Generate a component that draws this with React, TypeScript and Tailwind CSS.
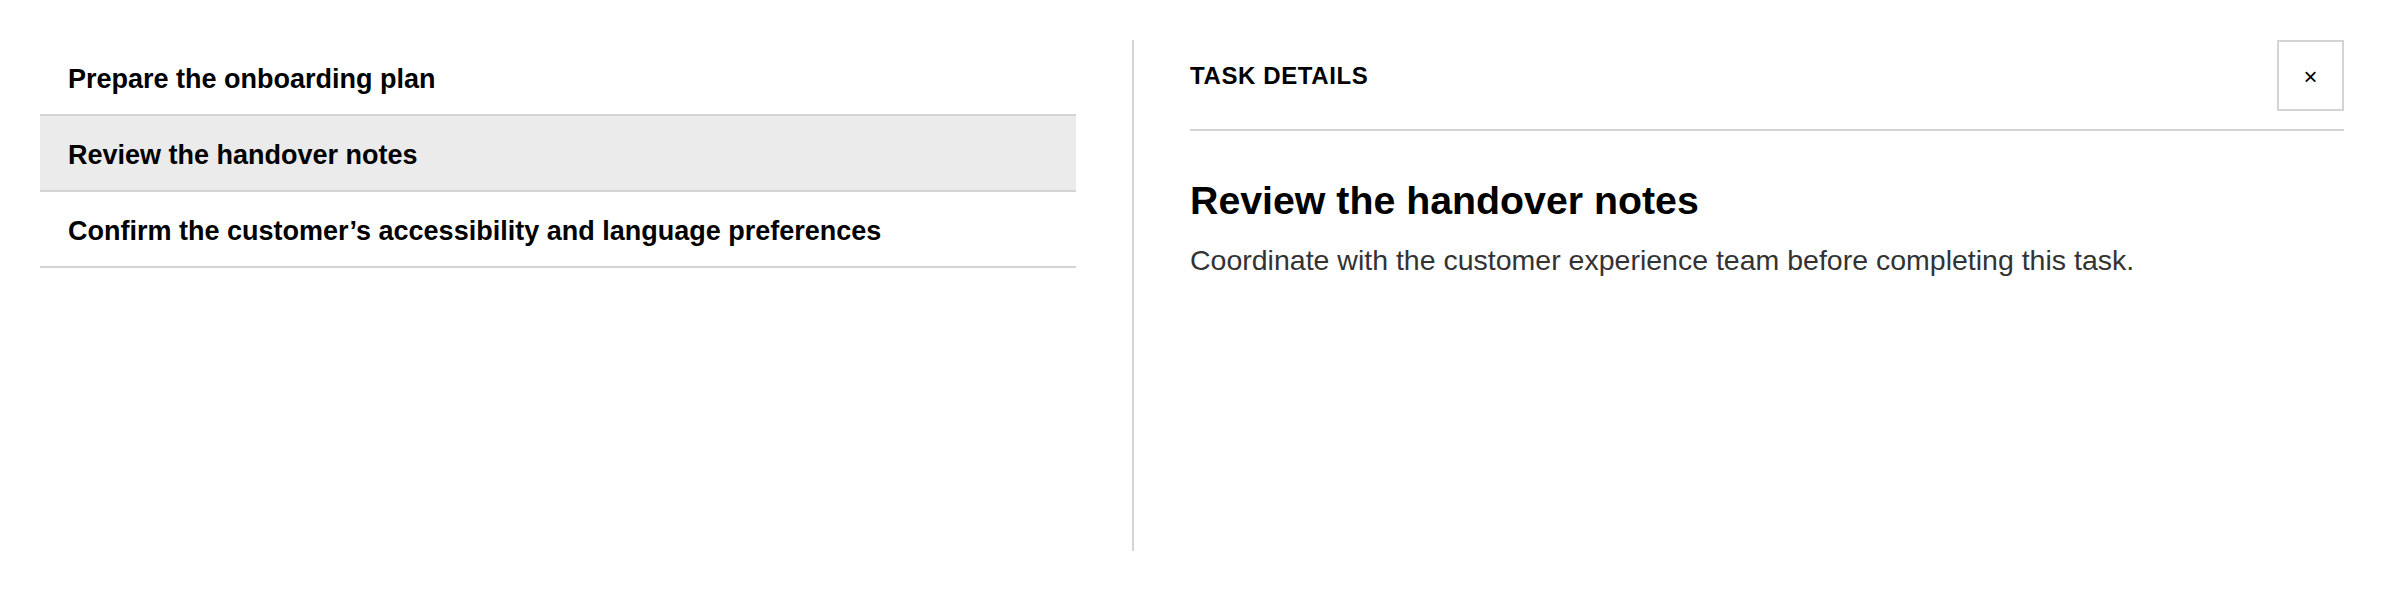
import React from "react";

const tasks = [
  "Prepare the onboarding plan",
  "Review the handover notes",
  "Confirm the customer\u2019s accessibility and language preferences",
];

export default function App() {
  const selected = 1;
  return (
    <div
      className="flex h-[591px] w-[2384px] bg-white p-[40px] text-black"
      style={{ fontFamily: '"Liberation Sans", Arial, Helvetica, sans-serif' }}
    >
      <ul className="w-[1036px] shrink-0">
        {tasks.map((t, i) => (
          <li
            key={t}
            className={
              "border-b-2 border-[#d4d4d4] pl-[28px] pr-[28px] pt-[20px] pb-[16px] text-[27px] font-bold leading-[38px] " +
              (i === selected ? "bg-[#ebebeb]" : "bg-white")
            }
          >
            {t}
          </li>
        ))}
      </ul>
      <section className="ml-[56px] flex-1 border-l-2 border-[#d4d4d4] pl-[56px]">
        <header className="flex items-center justify-between border-b-2 border-[#d4d4d4] pb-[18px]">
          <h2 className="text-[24px] font-bold uppercase leading-none tracking-[0.6px]">
            Task Details
          </h2>
          <button className="flex h-[71px] w-[67px] items-center justify-center border-2 border-[#d4d4d4] bg-white pt-[3px] text-[24px] leading-none text-black">
            ×
          </button>
        </header>
        <h1 className="mt-[46px] text-[39.3px] font-bold leading-[1.2]">
          Review the handover notes
        </h1>
        <p className="mt-[15px] text-[28.5px] leading-[42px] text-[#333333]">
          Coordinate with the customer experience team before completing this task.
        </p>
      </section>
    </div>
  );
}
